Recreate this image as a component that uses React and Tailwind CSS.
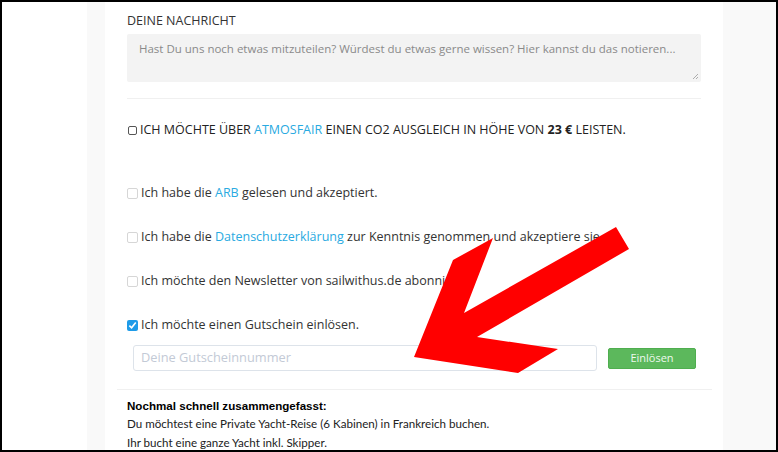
import React from 'react'

const sans = { fontFamily: '"Open Sans", "Liberation Sans", sans-serif' }

function Box({ checked, plain }) {
  if (plain) {
    return <span className="inline-block w-[9px] h-[9px] border border-[#555] rounded-[2px] bg-white ml-px mr-[3px] shrink-0" />
  }
  if (checked) {
    return (
      <span className="inline-flex items-center justify-center w-[11px] h-[11px] rounded-[2px] bg-[#1e9be8] mr-[3px] shrink-0">
        <svg width="9" height="9" viewBox="0 0 10 10">
          <path d="M1.5 5.2 L4 7.6 L8.6 1.8" stroke="white" strokeWidth="1.8" fill="none" />
        </svg>
      </span>
    )
  }
  return <span className="inline-block w-[11px] h-[11px] border border-[#d6d6d6] rounded-[2px] bg-white mr-[3px] shrink-0" />
}

function Row({ children, checked, className }) {
  return (
    <div className={`flex items-center h-[20px] text-[12.5px] text-[#333] ${className}`} style={sans}>
      <Box checked={checked} />
      <span>{children}</span>
    </div>
  )
}

export default function App() {
  return (
    <div className="relative w-[778px] h-[452px] border-2 border-black bg-white flex overflow-hidden">
      <div className="w-[85px] shrink-0 bg-white" />
      <div className="w-[18px] shrink-0 bg-[#f9f9f9]" />
      <div className="w-[618px] shrink-0 bg-white pl-[22px] pr-[22px] pt-[9px]">
        <div className="h-[20px] flex items-center text-[12.5px] text-[#333]" style={sans}>DEINE NACHRICHT</div>
        <div className="relative mt-[3px] h-[48px] bg-[#f3f3f3] rounded-[2px] px-[12px] pt-[6px] text-[11.5px] text-[#8a8a8a] whitespace-nowrap" style={sans}>
          Hast Du uns noch etwas mitzuteilen? Würdest du etwas gerne wissen? Hier kannst du das notieren...
          <svg className="absolute right-[2px] bottom-[2px]" width="7" height="7" viewBox="0 0 7 7">
            <path d="M6 1 L1 6 M6 4 L4 6" stroke="#999" strokeWidth="0.8" />
          </svg>
        </div>
        <div className="mt-[16px] h-px bg-[#f0f0f0]" />

        <div className="mt-[21px] flex items-center h-[20px] text-[12.5px] text-[#222]" style={sans}>
          <Box plain />
          <span>
            ICH MÖCHTE ÜBER <span className="text-[#29aae1]">ATMOSFAIR</span> EINEN CO2 AUSGLEICH IN HÖHE VON <b>23 €</b> LEISTEN.
          </span>
        </div>

        <Row className="mt-[43px]">
          Ich habe die <span className="text-[#29aae1]">ARB</span> gelesen und akzeptiert.
        </Row>
        <Row className="mt-[24px]">
          Ich habe die <span className="text-[#29aae1]">Datenschutzerklärung</span> zur Kenntnis genommen und akzeptiere sie.
        </Row>
        <Row className="mt-[24px]">Ich möchte den Newsletter von sailwithus.de abonnieren.</Row>
        <Row className="mt-[24px]" checked>Ich möchte einen Gutschein einlösen.</Row>

        <div className="mt-[10px] ml-[6px] flex items-center gap-[11px]">
          <div className="w-[464px] h-[26px] border border-[#dde3ea] rounded-[3px] px-[7px] flex items-center text-[12.8px] text-[#c3cad6]" style={sans}>
            Deine Gutscheinnummer
          </div>
          <div className="w-[88px] h-[21px] bg-[#5cb85c] border border-[#4fae4f] rounded-[2px] flex items-center justify-center text-[11px] text-[#eef9ee]" style={sans}>
            Einlösen
          </div>
        </div>

        <div className="mt-[18px] -ml-[10px] -mr-[11px] h-px bg-[#f0f0f0]" />

        <div className="mt-[8px] text-[11.6px] leading-[16px] font-bold text-black" style={{ fontFamily: '"Liberation Sans", Arial, sans-serif' }}>
          Nochmal schnell zusammengefasst:
        </div>
        <div className="text-[11.6px] leading-[19px] text-[#222]" style={{ fontFamily: 'Lato, "Liberation Sans", sans-serif' }}>
          <div>Du möchtest eine Private Yacht-Reise (6 Kabinen) in Frankreich buchen.</div>
          <div>Ihr bucht eine ganze Yacht inkl. Skipper.</div>
        </div>
      </div>
      <div className="flex-1 bg-[#f9f9f9]" />

      <svg className="absolute left-[-2px] top-[-2px]" width="778" height="452" viewBox="0 0 778 452">
        <polygon
          points="414,357 453,260 493,238 464,313 616,227 629,249 477,337 558,349 518,373"
          fill="#ff0000"
        />
      </svg>
    </div>
  )
}
